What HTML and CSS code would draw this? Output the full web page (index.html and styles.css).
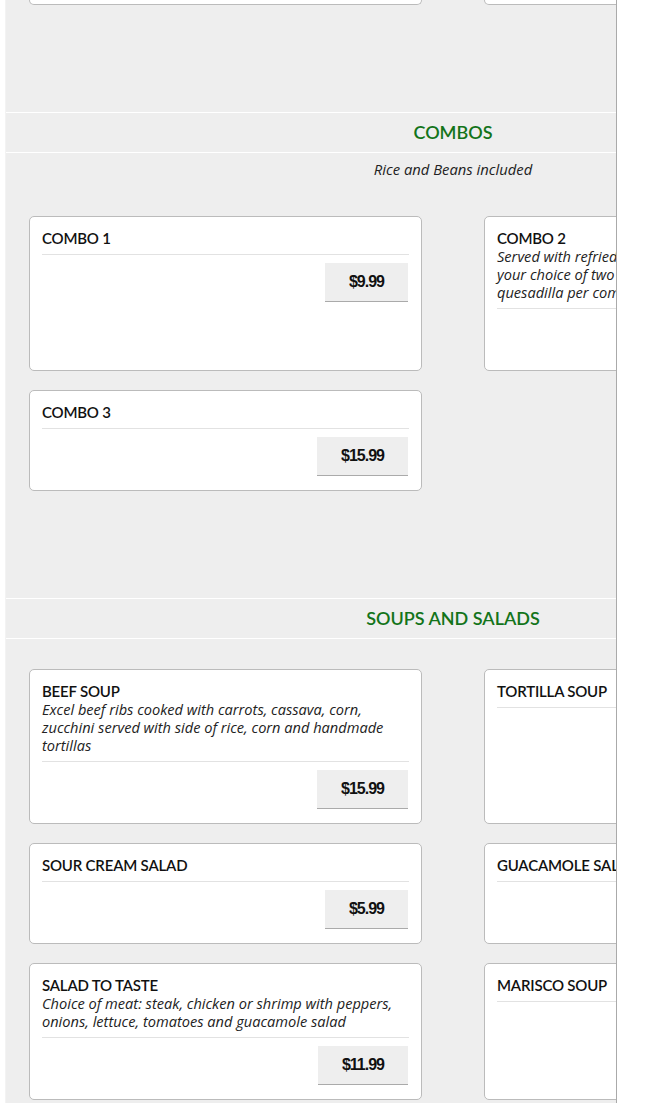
FILE: index.html
```html
<!DOCTYPE html>
<html lang="en">
<head>
    <meta charset="UTF-8">
    <meta name="viewport" content="width=device-width, initial-scale=1.0">
    <title>Menu</title>
    <link rel="stylesheet" href="styles.css">
</head>
<body>
    <div class="menu">
        <div class="menu-inner">

            <!-- end of the previous category, scrolled past -->
            <section class="category">
                <div class="items">
                    <div class="card card-cut"></div>
                    <div class="card card-cut"></div>
                </div>
            </section>

            <section class="category">
                <h2 class="category-title">COMBOS</h2>
                <p class="category-note">Rice and Beans included</p>
                <div class="items">
                    <div class="card">
                        <div class="card-title">COMBO 1</div>
                        <div class="card-line"></div>
                        <div class="card-price"><span class="price">$9.99</span></div>
                    </div>
                    <div class="card">
                        <div class="card-title">COMBO 2</div>
                        <div class="card-desc">Served with refried beans and rice, plus<br>your choice of two tacos, enchiladas or one<br>quesadilla per combo</div>
                        <div class="card-line"></div>
                        <div class="card-price"><span class="price">$12.99</span></div>
                    </div>
                    <div class="card">
                        <div class="card-title">COMBO 3</div>
                        <div class="card-line"></div>
                        <div class="card-price"><span class="price">$15.99</span></div>
                    </div>
                </div>
            </section>

            <section class="category">
                <h2 class="category-title">SOUPS AND SALADS</h2>
                <div class="items">
                    <div class="card">
                        <div class="card-title">BEEF SOUP</div>
                        <div class="card-desc">Excel beef ribs cooked with carrots, cassava, corn, zucchini served with side of rice, corn and handmade tortillas</div>
                        <div class="card-line"></div>
                        <div class="card-price"><span class="price">$15.99</span></div>
                    </div>
                    <div class="card">
                        <div class="card-title">TORTILLA SOUP</div>
                        <div class="card-line"></div>
                        <div class="card-price"><span class="price">$11.99</span></div>
                    </div>
                    <div class="card">
                        <div class="card-title">SOUR CREAM SALAD</div>
                        <div class="card-line"></div>
                        <div class="card-price"><span class="price">$5.99</span></div>
                    </div>
                    <div class="card">
                        <div class="card-title">GUACAMOLE SALAD</div>
                        <div class="card-line"></div>
                        <div class="card-price"><span class="price">$7.99</span></div>
                    </div>
                    <div class="card">
                        <div class="card-title">SALAD TO TASTE</div>
                        <div class="card-desc">Choice of meat: steak, chicken or shrimp with peppers, onions, lettuce, tomatoes and guacamole salad</div>
                        <div class="card-line"></div>
                        <div class="card-price"><span class="price">$11.99</span></div>
                    </div>
                    <div class="card">
                        <div class="card-title">MARISCO SOUP</div>
                        <div class="card-line"></div>
                        <div class="card-price"><span class="price">$17.99</span></div>
                    </div>
                </div>
            </section>

        </div>
    </div>
</body>
</html>
```

FILE: styles.css
```css
body {
    margin: 0;
    padding: 0;
    background-color: #fff;
    font-family: Lato, "Open Sans", sans-serif;
    color: #111;
    overflow: hidden;
}
.menu {
    margin-left: 5px;
    width: 610px;
    height: 1103px;
    overflow: hidden;
    background-color: #eee;
    border-left: 1px solid #f3f3f3;
    border-right: 1px solid #aaa;
}
.menu-inner {
    width: 894px;
}
.category {
    padding-bottom: 107px;
}
.category-title {
    margin: 0;
    height: 39px;
    line-height: 39px;
    border-top: 1px solid #fff;
    border-bottom: 1px solid #fff;
    text-align: center;
    font-size: 18px;
    font-weight: 600;
    color: #13741a;
}
.category-note {
    margin: 7px 0 8px;
    line-height: 18px;
    text-align: center;
    font-family: "Open Sans", sans-serif;
    font-size: 14.8px;
    font-style: italic;
    color: #222;
}
.items {
    display: grid;
    grid-template-columns: 393px 393px;
    column-gap: 62px;
    row-gap: 19px;
    padding: 30px 23px 0;
}
.category:first-child .items {
    padding-top: 0;
}
.card {
    background-color: #fff;
    border: 1px solid #bbb;
    border-radius: 5px;
    padding: 12px 12px 14px;
}
.card-cut {
    height: 4px;
    padding: 0;
    border-top: none;
    border-radius: 0 0 5px 5px;
}
.card-title {
    font-size: 15px;
    font-weight: 600;
    line-height: 18px;
    letter-spacing: -0.2px;
}
.card-desc {
    font-family: "Open Sans", sans-serif;
    font-size: 14.6px;
    font-style: italic;
    line-height: 18px;
    color: #222;
}
.card-line {
    margin: 7px 0 8px;
    border-top: 1px solid #e2e2e2;
}
.card-price {
    display: flex;
    justify-content: flex-end;
}
.price {
    height: 38px;
    line-height: 38px;
    padding: 0 24px;
    margin-right: 1px;
    background-color: #eee;
    border-bottom: 1px solid #aaa;
    font-family: "Liberation Sans", Arial, sans-serif;
    font-size: 16px;
    font-weight: bold;
    letter-spacing: -1px;
}
```
